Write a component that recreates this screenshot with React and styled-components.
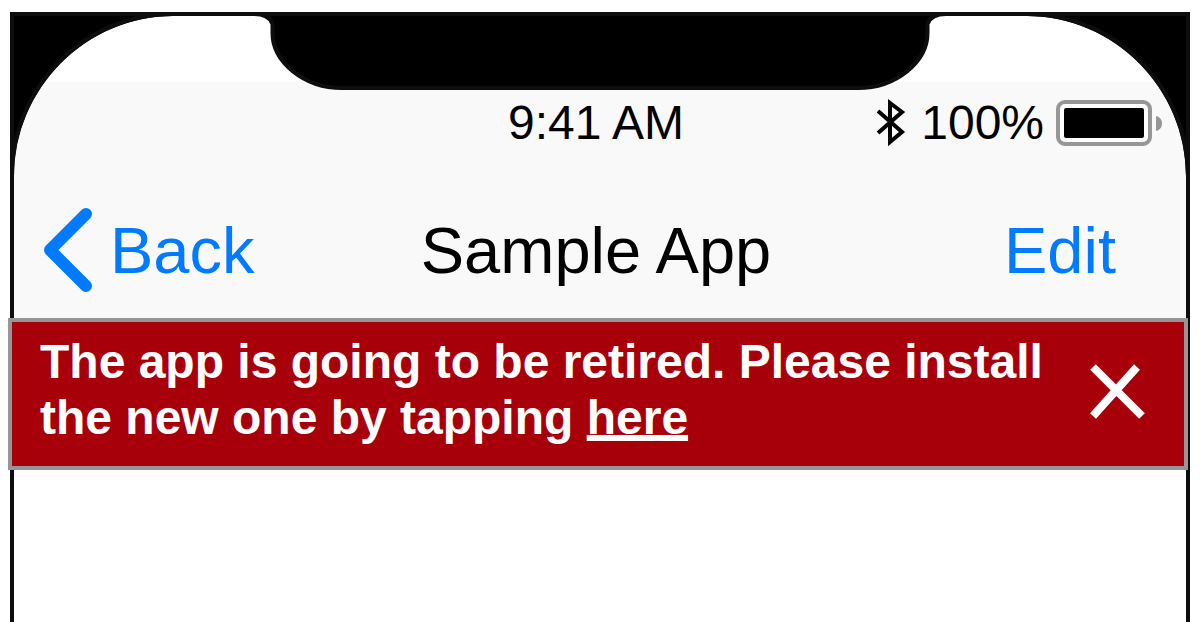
import React from 'react';
import styled, { createGlobalStyle } from 'styled-components';

const BLUE = '#007aff';
const BEZEL = '#0d0d0d';

const GlobalStyle = createGlobalStyle`
  *, *::before, *::after { box-sizing: border-box; }
  body {
    margin: 0;
    background: #ffffff;
    color: #000000;
    font-family: "Liberation Sans", Arial, Helvetica, sans-serif;
  }
`;

const Page = styled.main`
  display: flex;
  flex-direction: column;
  min-height: 100vh;
  padding: 12px 10px 0;
`;

const Phone = styled.div`
  position: relative;
  flex: 1;
  border: 4px solid ${BEZEL};
  border-bottom: 0;
`;

const Corner = styled.svg`
  position: absolute;
  top: -4px;
  ${({ $side }) => ($side === 'left' ? 'left: -4px;' : 'right: -4px; transform: scaleX(-1);')}
`;

const Notch = styled.svg`
  position: absolute;
  top: -4px;
  left: 50%;
  transform: translateX(-50%);
`;

const Header = styled.header`
  margin-top: 66px;
  background: #f9f9f9;
`;

const Bar = styled.div`
  display: grid;
  grid-template-columns: 1fr auto 1fr;
  align-items: center;
  padding-right: 8px;
`;

const StatusBar = styled(Bar)`
  height: 82px;
  font-size: 48px;
  line-height: 56px;
`;

const Time = styled.time`
  grid-column: 2;
`;

const Indicators = styled.div`
  display: flex;
  align-items: center;
  justify-content: flex-end;
  gap: 12px;
  padding-right: 16px;
`;

const NavBar = styled(Bar)`
  height: 154px;
  padding-top: 18px;
  font-size: 65px;
  line-height: 76px;
`;

const Title = styled.h1`
  margin: 0;
  padding-top: 2px;
  font-size: inherit;
  font-weight: 400;
`;

const PlainButton = styled.button`
  display: flex;
  align-items: center;
  margin: 0;
  padding: 0;
  border: 0;
  background: none;
  color: inherit;
  font: inherit;
  cursor: pointer;
`;

const ButtonLabel = styled.span`
  padding-top: 2px;
`;

const BackButton = styled(PlainButton)`
  justify-self: start;
  gap: 18px;
  margin-left: 30px;
  color: ${BLUE};
`;

const EditButton = styled(PlainButton)`
  justify-self: end;
  margin-right: 62px;
  color: ${BLUE};
`;

const Banner = styled.section`
  position: relative;
  display: flex;
  align-items: center;
  gap: 24px;
  margin: 0 -2px 0 -6px;
  padding: 12px 38px 20px 28px;
  border: 4px solid #969696;
  background: #a8000b;
  color: #ffffff;
`;

const Message = styled.p`
  flex: 1;
  margin: 0;
  font-size: 48px;
  font-weight: 700;
  line-height: 56px;
`;

const InstallLink = styled.a`
  color: inherit;
  text-decoration: underline;
  text-decoration-thickness: 6px;
  text-decoration-skip-ink: none;
  text-underline-offset: 1px;
`;

const CloseButton = styled(PlainButton)`
  padding-top: 4px;
`;

function CornerShape({ side }) {
  return (
    <Corner $side={side} width="164" height="172" viewBox="0 0 164 172" aria-hidden="true">
      <path d="M0 0H164V4C76 4 4 76 4 164V172H0Z" fill="#000000" />
      <path d="M162 2C74 2 2 76 2 164V172M0 2H164M2 0V172" fill="none" stroke={BEZEL} strokeWidth="4" />
    </Corner>
  );
}

function NotchShape() {
  return (
    <Notch width="692" height="80" viewBox="0 0 692 80" aria-hidden="true">
      <path
        d="M0 2C10 2 16 5 18.500 12V21C18.500 50 50 76 88 76H604C642 76 673.500 50 673.500 21V12C676 5 682 2 692 2"
        fill="#000000"
        stroke={BEZEL}
        strokeWidth="4"
      />
      <path d="M0 2H692" stroke={BEZEL} strokeWidth="4" />
    </Notch>
  );
}

function BluetoothIcon() {
  return (
    <svg width="33" height="48" viewBox="0 0 33 48" role="img" aria-label="Bluetooth">
      <path d="M2 12L26 33L14 43V4L26 13L2 34" fill="none" stroke="#000000" strokeWidth="4" />
    </svg>
  );
}

function BatteryIcon() {
  return (
    <svg width="106" height="46" viewBox="0 0 106 46" role="img" aria-label="Battery full">
      <rect x="2" y="2" width="92" height="42" rx="7" fill="#ffffff" stroke="#969696" strokeWidth="4" />
      <rect x="8" y="8" width="80" height="30" rx="2" fill="#000000" />
      <path d="M100 16C104 17 106 20 106 23.500C106 27 104 30 100 31Z" fill="#969696" />
    </svg>
  );
}

export default function App() {
  return (
    <>
      <GlobalStyle />
      <Page>
        <Phone>
          <Header>
            <StatusBar>
              <Time dateTime="09:41">9:41 AM</Time>
              <Indicators>
                <BluetoothIcon />
                <span>100%</span>
                <BatteryIcon />
              </Indicators>
            </StatusBar>
            <NavBar>
              <BackButton type="button">
                <svg width="48" height="84" viewBox="0 0 48 84" aria-hidden="true">
                  <path d="M42 6L6 42L42 78" fill="none" stroke={BLUE} strokeWidth="12" strokeLinecap="round" strokeLinejoin="round" />
                </svg>
                <ButtonLabel>Back</ButtonLabel>
              </BackButton>
              <Title>Sample App</Title>
              <EditButton type="button">
                <ButtonLabel>Edit</ButtonLabel>
              </EditButton>
            </NavBar>
          </Header>
          <Banner role="alert">
            <Message>
              The app is going to be retired. Please install the new one by tapping{' '}
              <InstallLink href="#install">here</InstallLink>
            </Message>
            <CloseButton type="button" aria-label="Close">
              <svg width="56" height="56" viewBox="0 0 56 56" aria-hidden="true">
                <path d="M3 3L52 52M47 3L3 52" fill="none" stroke="#ffffff" strokeWidth="8" />
              </svg>
            </CloseButton>
          </Banner>
          <CornerShape side="left" />
          <CornerShape side="right" />
          <NotchShape />
        </Phone>
      </Page>
    </>
  );
}
